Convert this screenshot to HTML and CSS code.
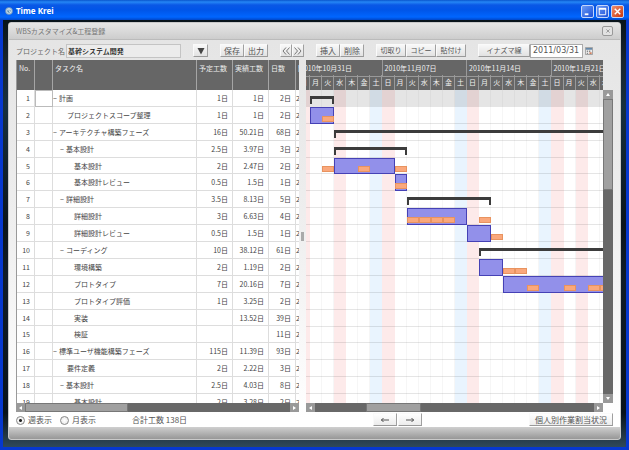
FILE: index.html
```html
<!DOCTYPE html>
<html>
<head>
<meta charset="utf-8">
<title>Time Krei</title>
<link rel="stylesheet" href="styles.css">
</head>
<body>
<header class="titlebar">
  <svg class="app-icon" viewBox="0 0 16 16"><circle cx="8" cy="8" r="7.5" fill="#7fa3c4"/><circle cx="8" cy="8" r="5.5" fill="#c8dcea"/><circle cx="8" cy="8" r="3.5" fill="#5a8aa8"/><path d="M8 3v5l3 2" stroke="#fff" stroke-width="1.5" fill="none"/></svg>
  <h1>Time Krei</h1>
  <button class="win" aria-label="Minimize"><svg viewBox="0 0 12 12"><path d="M3 9h4" stroke="#fff" stroke-width="2"/></svg></button>
  <button class="win" aria-label="Maximize"><svg viewBox="0 0 12 12"><path d="M2.5 3v6.500h7V3z" stroke="#fff" fill="none"/><path d="M2 3h8" stroke="#fff" stroke-width="2"/></svg></button>
  <button class="win win-close" aria-label="Close"><svg viewBox="0 0 12 12"><path d="M3 3l6 6M9 3l-6 6" stroke="#fff" stroke-width="1.600"/></svg></button>
</header>
<main class="desk">
<section class="panel">
  <div class="panel-head">
    <h2>WBSカスタマイズ&amp;工程登録</h2>
    <button class="panel-close" aria-label="閉じる"><svg viewBox="0 0 10 10"><path d="M3 3l4 4M7 3l-4 4" stroke="#999" stroke-width="1.200"/></svg></button>
  </div>
  <div class="toolbar">
    <div class="group project"><label for="project">プロジェクト名</label><input id="project" type="text" value="基幹システム開発"></div>
    <button class="btn pick" aria-label="選択"><svg viewBox="0 0 8 8"><path d="M0.500 1h7L4 7.500z" fill="#444"/></svg></button>
    <div class="group"><button class="btn w24">保存</button><button class="btn w24">出力</button></div>
    <div class="group"><button class="btn w12" aria-label="前へ"><svg viewBox="0 0 8 8"><path d="M4 0.500L1 4l3 3.500M7.500 0.500L4.500 4l3 3.500" fill="none" stroke="#777"/></svg></button><button class="btn w12" aria-label="次へ"><svg viewBox="0 0 8 8"><path d="M0.500 0.500L3.500 4l-3 3.500M4 0.500L7 4 4 7.500" fill="none" stroke="#777"/></svg></button></div>
    <div class="group"><button class="btn w24">挿入</button><button class="btn w24">削除</button></div>
    <div class="group"><button class="btn w30 kana">切取り</button><button class="btn w30 kana">コピー</button><button class="btn w30 kana">貼付け</button></div>
    <div class="group"><button class="btn w52 kana">イナズマ線</button><input class="date" type="text" aria-label="日付" value="2011/03/31"><button class="cal" aria-label="カレンダー"><svg viewBox="0 0 9 9"><path d="M.5.5h8v8h-8z" fill="#eee" stroke="#999"/><path d="M1 1h7v2H1z" fill="#6688a8"/><path d="M2 4h1.500v1.500H2zM4.500 4H6v1.500H4.500zM2 6.500h1.500V8H2z" fill="#8a8a8a"/><path d="M5 6h2.500v2H5z" fill="#d08060"/></svg></button></div>
  </div>
  <div class="work">
    <div class="list">
      <div class="clip">
      <table>
        <colgroup><col class="c-no"><col class="c-mark"><col class="c-task"><col class="c-plan"><col class="c-real"><col class="c-days"><col class="c-start"></colgroup>
        <thead><tr><th>No.</th><th></th><th>タスク名</th><th>予定工数</th><th>実績工数</th><th>日数</th><th>開始日</th></tr></thead>
        <tbody>
          <tr><td>1</td><td class="cursor"></td><td class="t0"><i>−</i>計画</td><td>1日</td><td>1日</td><td>2日</td><td>2010</td></tr>
          <tr><td>2</td><td></td><td class="t2">プロジェクトスコープ整理</td><td>1日</td><td>1日</td><td>2日</td><td>2010</td></tr>
          <tr><td>3</td><td></td><td class="t0"><i>−</i>アーキテクチャ構築フェーズ</td><td>16日</td><td>50.21日</td><td>68日</td><td>2010</td></tr>
          <tr><td>4</td><td></td><td class="t1"><i>−</i>基本設計</td><td>2.5日</td><td>3.97日</td><td>3日</td><td>2010</td></tr>
          <tr><td>5</td><td></td><td class="t3">基本設計</td><td>2日</td><td>2.47日</td><td>2日</td><td>2010</td></tr>
          <tr><td>6</td><td></td><td class="t3">基本設計レビュー</td><td>0.5日</td><td>1.5日</td><td>1日</td><td>2010</td></tr>
          <tr><td>7</td><td></td><td class="t1"><i>−</i>詳細設計</td><td>3.5日</td><td>8.13日</td><td>5日</td><td>2010</td></tr>
          <tr><td>8</td><td></td><td class="t3">詳細設計</td><td>3日</td><td>6.63日</td><td>4日</td><td>2010</td></tr>
          <tr><td>9</td><td></td><td class="t3">詳細設計レビュー</td><td>0.5日</td><td>1.5日</td><td>1日</td><td>2010</td></tr>
          <tr><td>10</td><td></td><td class="t1"><i>−</i>コーディング</td><td>10日</td><td>38.12日</td><td>61日</td><td>2010</td></tr>
          <tr><td>11</td><td></td><td class="t3">環境構築</td><td>2日</td><td>1.19日</td><td>2日</td><td>2010</td></tr>
          <tr><td>12</td><td></td><td class="t3">プロトタイプ</td><td>7日</td><td>20.16日</td><td>7日</td><td>2010</td></tr>
          <tr><td>13</td><td></td><td class="t3">プロトタイプ評価</td><td>1日</td><td>3.25日</td><td>2日</td><td>2010</td></tr>
          <tr><td>14</td><td></td><td class="t3">実装</td><td></td><td>13.52日</td><td>39日</td><td>2010</td></tr>
          <tr><td>15</td><td></td><td class="t3">検証</td><td></td><td></td><td>11日</td><td>2010</td></tr>
          <tr><td>16</td><td></td><td class="t0"><i>−</i>標準ユーザ機能構築フェーズ</td><td>115日</td><td>11.39日</td><td>93日</td><td>2010</td></tr>
          <tr><td>17</td><td></td><td class="t2">要件定義</td><td>2日</td><td>2.22日</td><td>3日</td><td>2010</td></tr>
          <tr><td>18</td><td></td><td class="t1"><i>−</i>基本設計</td><td>2.5日</td><td>4.03日</td><td>8日</td><td>2010</td></tr>
          <tr><td>19</td><td></td><td class="t3">基本設計</td><td>2日</td><td>3.28日</td><td>2日</td><td>2010</td></tr>
        </tbody>
      </table>
      </div>
      <div class="sb"><b class="left"></b><span class="thumb list-thumb"></span><b class="right"></b></div>
    </div>
    <div class="splitter"><span></span></div>
    <div class="gantt">
      <div class="clip scale-view">
        <div class="scale">
          <div class="weeks"><span>2010年10月31日</span><span>2010年11月07日</span><span>2010年11月14日</span><span>2010年11月21日</span></div>
          <div class="days"><span>日</span><span>月</span><span>火</span><span>水</span><span>木</span><span>金</span><span>土</span><span>日</span><span>月</span><span>火</span><span>水</span><span>木</span><span>金</span><span>土</span><span>日</span><span>月</span><span>火</span><span>水</span><span>木</span><span>金</span><span>土</span><span>日</span><span>月</span><span>火</span><span>水</span><span>木</span><span>金</span><span>土</span></div>
        </div>
      </div>
      <div class="clip plot-view">
        <div class="plot">
          <div class="cols"><u class="hol"></u><u></u><u></u><u class="hol"></u><u></u><u></u><u class="sat"></u><u class="hol"></u><u></u><u></u><u></u><u></u><u></u><u class="sat"></u><u class="hol"></u><u></u><u></u><u></u><u></u><u></u><u class="sat"></u><u class="hol"></u><u></u><u class="hol"></u><u></u><u></u><u></u><u class="sat"></u></div>
          <div class="rows"><u></u><u></u><u></u><u></u><u></u><u></u><u></u><u></u><u></u><u></u><u></u><u></u><u></u><u></u><u></u><u></u><u></u><u></u><u></u></div>
          <span class="sum" style="grid-area:1/2/2/4"></span>
          <span class="bar" style="grid-area:2/2/3/4"></span><span class="act" style="grid-area:2/3/3/4"></span>
          <span class="sum" style="grid-area:3/4/4/29"></span>
          <span class="sum" style="grid-area:4/4/5/10"></span>
          <span class="bar" style="grid-area:5/4/6/9"></span><span class="act" style="grid-area:5/3/6/4"></span><span class="act" style="grid-area:5/6/6/7"></span><span class="act" style="grid-area:5/9/6/10"></span>
          <span class="bar" style="grid-area:6/9/7/10"></span><span class="act" style="grid-area:6/9/7/10"></span>
          <span class="sum" style="grid-area:7/10/8/17"></span>
          <span class="bar" style="grid-area:8/10/9/15"></span><span class="act" style="grid-area:8/10/9/11"></span><span class="act" style="grid-area:8/11/9/12"></span><span class="act" style="grid-area:8/12/9/13"></span><span class="act" style="grid-area:8/13/9/14"></span><span class="act" style="grid-area:8/16/9/17"></span>
          <span class="bar" style="grid-area:9/15/10/17"></span><span class="act" style="grid-area:9/17/10/18"></span>
          <span class="sum" style="grid-area:10/16/11/29"></span>
          <span class="bar" style="grid-area:11/16/12/18"></span><span class="act" style="grid-area:11/18/12/19"></span><span class="act" style="grid-area:11/19/12/20"></span>
          <span class="bar" style="grid-area:12/18/13/29"></span><span class="act" style="grid-area:12/20/13/21"></span><span class="act" style="grid-area:12/23/13/24"></span><span class="act" style="grid-area:12/25/13/26"></span><span class="act" style="grid-area:12/26/13/27"></span>
        </div>
      </div>
      <div class="sb vertical"><b class="up"></b><span class="thumb v-thumb"></span><b class="down"></b></div>
      <div class="sb horizontal"><b class="left"></b><span class="thumb gantt-thumb"></span><b class="right"></b></div>
    </div>
  </div>
  <div class="foot">
    <div class="summary">
      <label><input type="radio" name="view" checked>週表示</label>
      <label><input type="radio" name="view">月表示</label>
      <span class="total">合計工数 138日</span>
    </div>
    <button class="btn w24" aria-label="左へ"><svg viewBox="0 0 8 8"><path d="M0 4h8M2.500 2L.5 4l2 2" fill="none" stroke="#555"/></svg></button>
    <button class="btn w24" aria-label="右へ"><svg viewBox="0 0 8 8"><path d="M0 4h8M5.500 2l2 2-2 2" fill="none" stroke="#555"/></svg></button>
    <button class="btn assign">個人別作業割当状況</button>
  </div>
  <div class="base"></div>
</section>
</main>
</body>
</html>
```
FILE: styles.css
```css
* { box-sizing: border-box; }

body {
  margin: 0;
  height: 100vh;
  display: flex;
  flex-direction: column;
  overflow: hidden;
  background: #0638cf;
  color: #444;
  font: 7px/12px "Noto Sans CJK JP", sans-serif;
}

button, input { font: inherit; color: inherit; margin: 0; padding: 0; }
svg { display: block; }
h1, h2 { margin: 0; }

.titlebar {
  flex: none;
  height: 20px;
  padding: 2px 5px 0;
  display: flex;
  align-items: center;
  gap: 2px;
  background: linear-gradient(#0a55cc 0, #2586f5 2px, #0a58e6 5px, #0055e8 10px, #0066ff 17px, #0046c8 20px);
}
.app-icon { width: 8px; height: 8px; }
.titlebar h1 {
  flex: 1;
  padding-left: 1px;
  color: #fff;
  font: bold 8px/12px "Noto Sans", sans-serif;
}
.win {
  width: 13px;
  height: 13px;
  border: 1px solid #c4d6fb;
  border-radius: 2px;
  background: linear-gradient(135deg, #6d9cf5, #1c50d8);
}
.win svg { width: 11px; height: 11px; }
.win-close { background: linear-gradient(135deg, #f09070, #c8350c); }

.desk {
  flex: 1;
  min-height: 0;
  display: flex;
  margin: 0 3px 3px;
  padding: 2px 5px 7px;
  background: linear-gradient(#08131a 0, #18252e 10%, #17303f 20%, #0a141b 48%, #101c28 60%, #08121a 92%, #2f4959 100%);
}
.panel {
  flex: 1;
  min-width: 0;
  display: flex;
  flex-direction: column;
  overflow: hidden;
  border: 1px solid #c9c9c9;
  border-radius: 3px;
  background: linear-gradient(#e4e4e4, #efefef 50%, #fff 95%);
}
.panel-head {
  flex: none;
  height: 17px;
  padding: 0 7px;
  display: flex;
  align-items: center;
  border-bottom: 1px solid #bbb;
  background: linear-gradient(#e6e6e6, #cdcdcd);
}
.panel-head h2 { flex: 1; font-size: 7px; font-weight: normal; color: #777; }
.panel-close {
  width: 11px;
  height: 10px;
  border: 1px solid #999;
  border-radius: 2px;
  background: #e2e2e2;
}
.panel-close svg { height: 8px; margin: auto; }

.toolbar {
  flex: none;
  height: 20px;
  padding: 1px 7px 0;
  display: flex;
  align-items: center;
  gap: 12px;
}
.group { display: flex; align-items: center; }
.project { color: #666; }
.project label { width: 50px; white-space: nowrap; }
.project input {
  width: 115px;
  height: 14px;
  padding: 0 1px;
  border: 1px solid #c4c4c4;
  background: #ececec;
  color: #111;
  font-weight: 500;
}
.btn {
  flex: none;
  height: 13px;
  display: flex;
  align-items: center;
  justify-content: center;
  border: 1px solid #fafafa;
  border-right-color: #a0a0a0;
  border-bottom-color: #999;
  background: linear-gradient(#f8f8f8, #e2e2e2);
  color: #555;
  font-size: 8px;
  line-height: 11px;
  white-space: nowrap;
}
.btn svg { width: 8px; height: 8px; }
.kana { font-size: 7px; }
.pick { width: 15px; }
.w12 { width: 12px; }
.w24 { width: 24px; }
.w30 { width: 30px; }
.w52 { width: 52px; }
.date {
  width: 53px;
  height: 14px;
  padding: 0 2px;
  border: 1px solid #aaa;
  background: #fff;
  color: #555;
  font: 8px/12px "DejaVu Sans", sans-serif;
}
.cal { margin-left: 2px; border: 0; background: none; }
.cal svg { width: 8px; height: 8px; }

.work { flex: 1; min-height: 0; display: flex; padding: 0 7px; }
.clip { min-width: 0; min-height: 0; overflow: hidden; background: #fff; }

.list { flex: 0 0 283px; min-width: 0; display: flex; flex-direction: column; }
.list .clip { flex: 1; }
table {
  width: 340px;
  height: 351px;
  table-layout: fixed;
  border-spacing: 0;
  border-left: 1px solid #999;
}
.c-no, .c-mark { width: 18px; }
.c-task { width: 144px; }
.c-plan, .c-real { width: 36px; }
.c-days { width: 27px; }
th {
  height: 30px;
  padding: 2px;
  vertical-align: top;
  text-align: left;
  font-weight: normal;
  color: #f0f0f0;
  background: #666;
  border-right: 1px solid #a5a5a5;
  white-space: nowrap;
}
td {
  padding: 0 4px 0 0;
  text-align: right;
  border-right: 1px solid #ddd;
  border-bottom: 1px solid #ddd;
  white-space: nowrap;
}
td:last-child { padding-left: 0; text-align: left; }
td.cursor { border: 1px solid #bbb; }
td.t0, td.t1, td.t2, td.t3 { text-align: left; }
td.t0 { padding-left: 0; }
td.t1 { padding-left: 7px; }
td.t2 { padding-left: 14px; }
td.t3 { padding-left: 21px; }
td i { display: inline-block; width: 6px; font-style: normal; }

.splitter { flex: 0 0 7px; display: flex; align-items: center; justify-content: center; }
.splitter span { width: 3px; height: 9px; background: #aaa; }

.gantt {
  flex: 1;
  min-width: 0;
  display: grid;
  grid-template: 30px minmax(0, 1fr) 9px / minmax(0, 1fr) 10px;
}
.scale-view { grid-area: 1 / 1; }
.scale { width: 338px; margin-left: -8px; color: #f0f0f0; background: #666; }
.weeks { display: grid; grid-template-columns: repeat(4, 1fr); height: 15px; }
.weeks span { padding: 2px; border-right: 1px solid #999; border-bottom: 1px solid #999; }
.days { display: grid; grid-template-columns: repeat(28, 1fr); height: 15px; }
.days span { text-align: center; line-height: 14px; border-right: 1px solid #999; }

.plot-view { grid-area: 2 / 1; }
.plot {
  width: 338px;
  height: 321px;
  margin-left: -8px;
  display: grid;
  grid-template: repeat(19, 1fr) / repeat(28, 1fr);
}
.cols, .rows { grid-area: 1 / 1 / -1 / -1; display: grid; }
.cols { grid-template-columns: repeat(28, 1fr); }
.cols u { border-right: 1px solid #f6f6f6; }
.cols .sat { background: #e9f4fe; border-color: #e9f4fe; }
.cols .hol { background: #fdeaea; border-color: #fdeaea; }
.rows { grid-template-rows: repeat(19, 1fr); }
.rows u { border-bottom: 1px solid rgba(0, 0, 0, .1); }
.rows u:first-child { background: rgba(0, 0, 0, .1); border-color: transparent; }
.sum {
  height: 8px;
  margin-top: 6px;
  border: 2px solid #3c3c3c;
  border-top-width: 3px;
  border-bottom: 0;
}
.bar { background: #9290ea; border: 1px solid #4541b5; }
.act {
  align-self: end;
  height: 6px;
  margin-bottom: 2px;
  background: #faa87c;
  border: 1px solid #e8935f;
}

.sb { display: flex; flex: 0 0 9px; background: #686868; }
.sb b { flex: none; width: 9px; height: 9px; display: grid; place-items: center; background: #999; }
.sb b::before { content: ""; border: 2px solid transparent; }
.sb .left::before { border-left: 0; border-right: 3px solid #fff; }
.sb .right::before { border-right: 0; border-left: 3px solid #fff; }
.sb .up::before { border-top: 0; border-bottom: 3px solid #fff; }
.sb .down::before { border-bottom: 0; border-top: 3px solid #fff; }
.sb .right, .sb .down { margin-left: auto; }
.thumb { background: #a0a0a0; border: 1px solid #777; }
.list-thumb { width: 103px; }
.horizontal { grid-area: 3 / 1; }
.gantt-thumb { width: 55px; margin-left: 51px; }
.vertical { grid-area: 2 / 2; flex-direction: column; }
.vertical b { width: 10px; }
.v-thumb { height: 91px; }
.sb.vertical .down { margin: auto 0 0; }

.foot {
  flex: none;
  height: 15px;
  padding: 1px 7px 0;
  display: flex;
  gap: 1px;
  font-size: 8px;
  color: #555;
}
.foot .btn { background: linear-gradient(#fff, #ececec); }
.summary { width: 356px; display: flex; align-items: center; gap: 8px; }
.summary label { display: flex; align-items: center; gap: 3px; }
.summary input {
  appearance: none;
  width: 9px;
  height: 9px;
  border: 1px solid #888;
  border-radius: 50%;
  background: radial-gradient(#fff, #e4e4e4);
}
.summary input:checked { background: radial-gradient(#222 1px, #f4f4f4 2px); }
.total { margin-left: 28px; }
.assign { width: 84px; margin-left: auto; }

.base { flex: none; height: 12px; background: linear-gradient(#cfcfcf, #979797); }
```
